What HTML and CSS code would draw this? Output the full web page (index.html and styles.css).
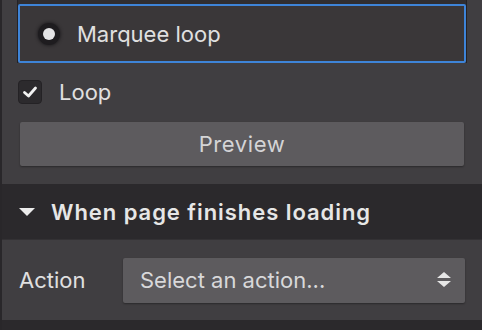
FILE: index.html
```html
<!DOCTYPE html>
<html>
<head>
<meta charset="utf-8">
<link rel="stylesheet" href="styles.css">
</head>
<body>
<div class="panel">
  <div class="section">
    <div class="list">
      <div class="list-item selected">
        <span class="radio"><span class="radio-dot"></span></span>
        <span class="item-label">Marquee loop</span>
      </div>
    </div>
    <label class="check-row">
      <span class="checkbox">
        <svg width="18" height="18" viewBox="0 0 18 18"><path d="M3.5 9.5 L7.5 13 L14.5 5" fill="none" stroke="#f2f2f2" stroke-width="2.8" stroke-linecap="round" stroke-linejoin="round"/></svg>
      </span>
      <span class="check-label">Loop</span>
    </label>
    <button class="btn">Preview</button>
  </div>
  <div class="header">
    <svg class="caret" width="16" height="9" viewBox="0 0 16 9"><path d="M0 0 H16 L8 8 Z" fill="#ececec"/></svg>
    <span class="header-title">When page finishes loading</span>
  </div>
  <div class="field-row">
    <span class="field-label">Action</span>
    <div class="select">
      <span class="select-text">Select an action...</span>
      <svg class="updown" width="14" height="16" viewBox="0 0 14 16"><path d="M7 0 L14 6 H0 Z M0 9 H14 L7 15 Z" fill="#e6e6e6"/></svg>
    </div>
  </div>
  <div class="footer"></div>
</div>
</body>
</html>
```
FILE: styles.css
```css
html, body {
  margin: 0;
  padding: 0;
  background: #403e41;
}
body {
  font-family: Inter, "Noto Sans", sans-serif;
  color: #e2e2e2;
  width: 482px;
  height: 330px;
  overflow: hidden;
}
.panel {
  border-left: 2px solid #29272a;
  display: flex;
  flex-direction: column;
  height: 330px;
  box-sizing: border-box;
}
.section {
  padding: 0 16px 0 16px;
  height: 184px;
  box-sizing: border-box;
  display: flex;
  flex-direction: column;
}
.list {
  background: #302e31;
  padding-top: 4px;
  box-shadow: -1px 0 0 #242225, 1px 0 0 #242225;
}
.list-item {
  display: flex;
  align-items: center;
  height: 59px;
  box-sizing: border-box;
  background: #3a3739;
  border: 2px solid #3e84d8;
  border-radius: 2px;
  padding-left: 18px;
}
.radio {
  width: 22px;
  height: 22px;
  border-radius: 50%;
  background: #1e1c1f;
  display: flex;
  align-items: center;
  justify-content: center;
  box-shadow: 0 0 3px 1px rgba(20, 18, 21, 0.6);
}
.radio-dot {
  width: 12px;
  height: 12px;
  border-radius: 50%;
  background: #e4e4e6;
}
.item-label {
  margin-left: 17px;
  font-size: 22px;
  color: #e0e0e0;
}
.check-row {
  display: flex;
  align-items: center;
  margin-top: 17px;
  height: 24px;
}
.checkbox {
  width: 24px;
  height: 24px;
  box-sizing: border-box;
  border-radius: 4px;
  background: #2c2a2d;
  border: 1px solid #242225;
  display: flex;
  align-items: center;
  justify-content: center;
}
.check-label {
  margin-left: 17px;
  font-size: 22px;
  color: #e0e0e0;
}
.btn {
  margin: 18px 2px 0 2px;
  height: 44px;
  border: none;
  border-radius: 2px;
  background: #5d5b5e;
  color: #d4d4d6;
  font-family: Inter, "Noto Sans", sans-serif;
  font-size: 22px;
  letter-spacing: 0.6px;
  box-shadow: 0 1px 2px rgba(0, 0, 0, 0.35);
  padding: 0;
}
.header {
  height: 55px;
  background: #2b292c;
  display: flex;
  align-items: center;
  padding-left: 17px;
  border-bottom: 1px solid #333134;
}
.caret {
  margin-top: 1px;
}
.header-title {
  margin-left: 16px;
  font-size: 22px;
  font-weight: 600;
  color: #e6e6e6;
  letter-spacing: 0.95px;
}
.field-row {
  height: 80px;
  box-sizing: border-box;
  display: flex;
  align-items: center;
  padding: 0 17px 0 17px;
}
.field-label {
  width: 104px;
  font-size: 22px;
  color: #e0e0e0;
}
.select {
  flex: 1;
  height: 45px;
  box-sizing: border-box;
  background: #5d5b5e;
  border-radius: 2px;
  display: flex;
  align-items: center;
  justify-content: space-between;
  padding: 0 14px 0 17px;
  box-shadow: 0 1px 2px rgba(0, 0, 0, 0.35);
}
.select-text {
  font-size: 22px;
  color: #d8d8da;
}
.footer {
  flex: 1;
  background: #2b292c;
}
```
